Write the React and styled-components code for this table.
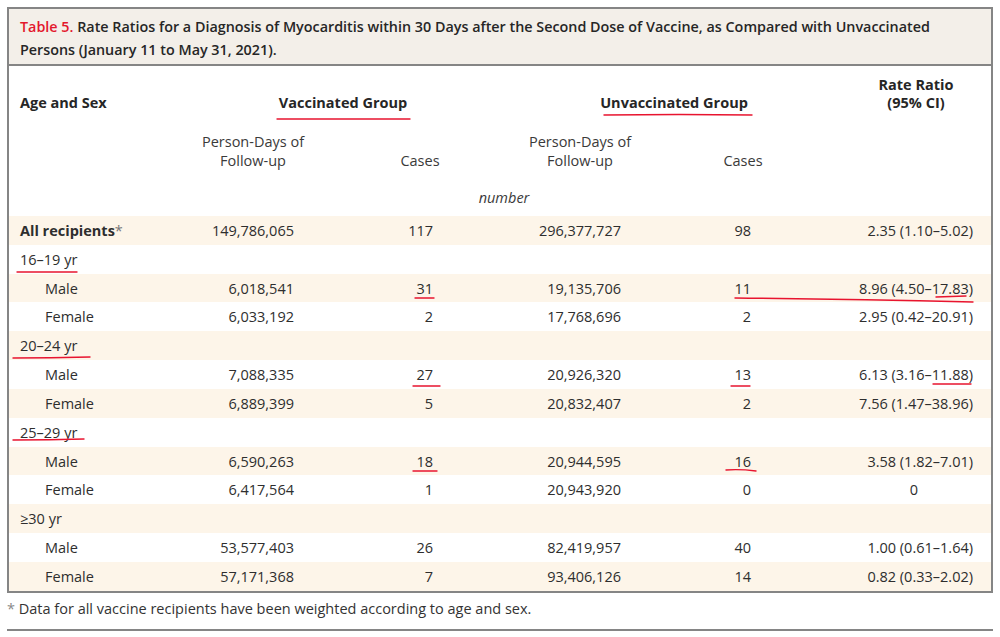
import React from 'react'
import styled, { createGlobalStyle } from 'styled-components'

const GlobalStyle = createGlobalStyle`
    html, body {
        margin: 0;
        padding: 0;
        background: #ffffff;
    }
    body {
        font-family: "Open Sans", "Liberation Sans", sans-serif;
        color: #2b2b2b;
    }
`

//Styled Components
const Page = styled.div`
    position: relative;
    width: 1000px;
    height: 637px;
    padding: 7px 7px 0 7px;
    box-sizing: border-box;
    overflow: hidden;
`

const Box = styled.div`
    border: 2px solid #858585;
    display: flex;
    flex-direction: column;
`

const Title = styled.div`
    background-color: #f3efe9;
    border-bottom: 2px solid #858585;
    padding: 6px 10px 3px 11px;
    font-size: 14.35px;
    line-height: 23px;
    font-weight: 600;
    color: #262626;
    span {
        color: #e3182d;
    }
`

const HeadRow = styled.div`
    display: grid;
    grid-template-columns: ${p => p.cols};
    align-items: end;
    padding: ${p => p.pad} 1px 0 11px;
    font-size: 14.5px;
    line-height: ${p => p.lh || '18px'};
    text-align: center;
    font-weight: ${p => (p.bold ? 700 : 400)};
    color: ${p => (p.bold ? '#262626' : '#3a3a3a')};
    .left {
        text-align: left;
    }
`

const Unit = styled.div`
    padding: 19px 0 9px 0;
    text-align: center;
    font-style: italic;
    font-size: 14.5px;
    line-height: 18px;
    color: #3a3a3a;
    margin-left: 8px;
`

const Row = styled.div`
    display: grid;
    grid-template-columns: 180px 94px 139px 188px 130px 222px 1fr;
    align-items: center;
    height: 28.83px;
    padding: 0 1px 0 11px;
    background-color: ${p => (p.striped ? '#fdf5e9' : '#ffffff')};
    font-size: 14.5px;
    color: #2e2e2e;
`

const Label = styled.div`
    padding-left: ${p => (p.sub ? '25px' : '0')};
    font-weight: ${p => (p.bold ? 700 : 400)};
    white-space: nowrap;
    small {
        font-size: 14.5px;
        font-weight: 400;
        color: #777;
    }
`

const Num = styled.div`
    text-align: ${p => p.align || 'right'};
    white-space: nowrap;
    padding-right: ${p => p.pr || '0'};
`

const Footnote = styled.div`
    padding: 6px 0 10px 0;
    font-size: 14.5px;
    line-height: 20px;
    color: #333;
    border-bottom: 2px solid #858585;
    span {
        color: #888;
    }
`

const Marks = styled.svg`
    position: absolute;
    left: 0;
    top: 0;
    pointer-events: none;
`

const rows = [
    { label: 'All recipients', star: true, bold: true, v: ['149,786,065', '117', '296,377,727', '98', '2.35 (1.10–5.02)'] },
    { label: '16–19 yr' },
    { label: 'Male', sub: true, v: ['6,018,541', '31', '19,135,706', '11', '8.96 (4.50–17.83)'] },
    { label: 'Female', sub: true, v: ['6,033,192', '2', '17,768,696', '2', '2.95 (0.42–20.91)'] },
    { label: '20–24 yr' },
    { label: 'Male', sub: true, v: ['7,088,335', '27', '20,926,320', '13', '6.13 (3.16–11.88)'] },
    { label: 'Female', sub: true, v: ['6,889,399', '5', '20,832,407', '2', '7.56 (1.47–38.96)'] },
    { label: '25–29 yr' },
    { label: 'Male', sub: true, v: ['6,590,263', '18', '20,944,595', '16', '3.58 (1.82–7.01)'] },
    { label: 'Female', sub: true, v: ['6,417,564', '1', '20,943,920', '0', '0'], centerLast: true },
    { label: '≥30 yr' },
    { label: 'Male', sub: true, v: ['53,577,403', '26', '82,419,957', '40', '1.00 (0.61–1.64)'] },
    { label: 'Female', sub: true, v: ['57,171,368', '7', '93,406,126', '14', '0.82 (0.33–2.02)'] },
]

// hand drawn red underlines on top of the table
const strokes = [
    'M277 119 L410 119',
    'M604 115 Q680 114 752 115',
    'M17 272 L77 272',
    'M415 298 L434 298',
    'M735 298 Q850 299 973 302',
    'M936 297 L966 296',
    'M13 358 Q50 358 90 357',
    'M413 386 L440 386',
    'M731 386 L750 386',
    'M933 384 L971 384',
    'M13 440 Q50 440 84 439',
    'M413 471 L437 471',
    'M726 470 Q740 469 756 471',
]

const App = () => {
    return (
        <Page>
            <GlobalStyle />
            <Box>
                <Title>
                    <span>Table 5.</span> Rate Ratios for a Diagnosis of Myocarditis within 30 Days after the Second Dose of Vaccine, as Compared with Unvaccinated
                    <br />
                    Persons (January 11 to May 31, 2021).
                </Title>

                <HeadRow bold pad="10px" cols="160px 326px 336px 148px">
                    <div className="left">Age and Sex</div>
                    <div>Vaccinated Group</div>
                    <div>Unvaccinated Group</div>
                    <div>Rate Ratio<br />(95% CI)</div>
                </HeadRow>

                <HeadRow pad="20px" lh="19px" cols="170px 126px 208px 112px 214px 1fr">
                    <div />
                    <div>Person-Days of<br />Follow-up</div>
                    <div>Cases</div>
                    <div>Person-Days of<br />Follow-up</div>
                    <div>Cases</div>
                    <div />
                </HeadRow>

                <Unit>number</Unit>

                {rows.map((r, i) => (
                    <Row key={i} striped={i % 2 === 0}>
                        <Label sub={r.sub} bold={r.bold}>
                            {r.label}
                            {r.star && <small>*</small>}
                        </Label>
                        {r.v ? (
                            <>
                                <Num>{r.v[0]}</Num>
                                <Num>{r.v[1]}</Num>
                                <Num>{r.v[2]}</Num>
                                <Num>{r.v[3]}</Num>
                                {r.centerLast
                                    ? <Num pr="55px">{r.v[4]}</Num>
                                    : <Num>{r.v[4]}</Num>}
                            </>
                        ) : null}
                    </Row>
                ))}
            </Box>

            <Footnote>
                <span>*</span> Data for all vaccine recipients have been weighted according to age and sex.
            </Footnote>

            <Marks width="1000" height="637" viewBox="0 0 1000 637">
                {strokes.map((d, i) => (
                    <path key={i} d={d} fill="none" stroke="#e8142f" strokeWidth="1.4" strokeLinecap="round" />
                ))}
            </Marks>
        </Page>
    )
}

export default App
